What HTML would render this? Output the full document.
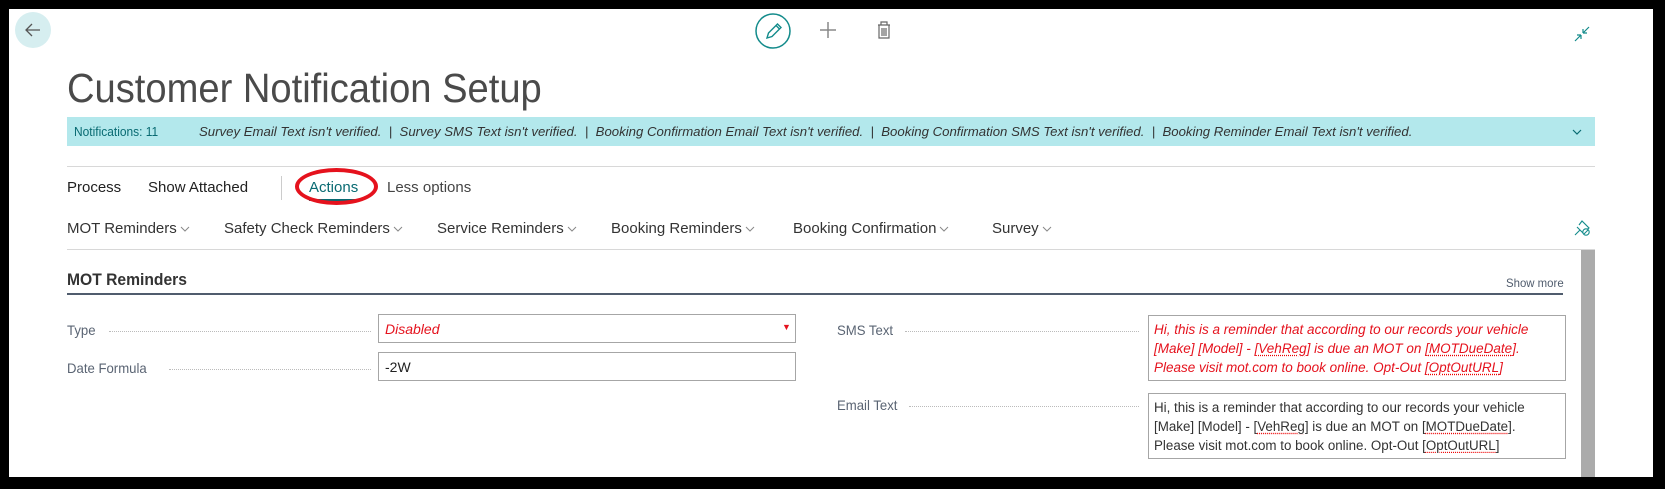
<!DOCTYPE html>
<html><head><meta charset="utf-8"><style>
*{margin:0;padding:0;box-sizing:border-box}
html,body{width:1665px;height:489px;overflow:hidden;background:#000;font-family:"Liberation Sans",sans-serif}
#pg{position:absolute;left:9px;top:9px;width:1644px;height:468px;background:#fff;overflow:hidden}
.a{position:absolute;white-space:nowrap}
.t{color:#212121;font-size:15px}
.lbl{color:#5a6473;font-size:14px;transform:scaleX(0.94);transform-origin:left}
.dots{position:absolute;border-top:1px dotted #bbb;height:0}
.box{position:absolute;border:1px solid #a6a6a6;background:#fff}
.sq{text-decoration:underline dotted #e00;text-underline-offset:2px}
.chev{display:inline-block;width:10px;height:6px;margin-left:3px;vertical-align:middle}
</style></head><body><div id="pg">
<div class="a" style="left:6px;top:3px;width:36px;height:36px;border-radius:50%;background:#d6eef0"></div>
<svg class="a" style="left:15px;top:12px" width="18" height="18" viewBox="0 0 18 18"><path d="M16 9H2M8 3L2 9l6 6" fill="none" stroke="#555" stroke-width="1.3"/></svg>

<svg class="a" style="left:745px;top:3px" width="38" height="38" viewBox="0 0 38 38"><circle cx="19" cy="19" r="17" fill="none" stroke="#138b8b" stroke-width="1.5"/><path d="M13 26l1.5-5 9-9 3.5 3.5-9 9zM22 13.5l3.5 3.5" fill="none" stroke="#138b8b" stroke-width="1.4"/></svg>
<svg class="a" style="left:810px;top:12px" width="18" height="18" viewBox="0 0 18 18"><path d="M9 1v16M1 9h16" stroke="#888" stroke-width="1.5"/></svg>
<svg class="a" style="left:867px;top:11px" width="16" height="20" viewBox="0 0 16 20"><path d="M2 5h12M5 5V2h6v3M3 5v13h10V5M6 8v8M8 8v8M10 8v8" fill="none" stroke="#666" stroke-width="1.2"/></svg>
<svg class="a" style="left:1564px;top:16px" width="18" height="18" viewBox="0 0 18 18"><path d="M2 16l6-6M8 10H4M8 10v4M16 2l-6 6M10 8h4M10 8V4" fill="none" stroke="#138b8b" stroke-width="1.2"/></svg>

<div class="a" style="left:58px;top:56px;font-size:41px;color:#4a4a4a;font-weight:300;transform:scaleX(0.93);transform-origin:left">Customer Notification Setup</div>

<div class="a" style="left:58px;top:108px;width:1528px;height:29px;background:#b3e8ec"></div>
<div class="a" style="left:65px;top:115px;font-size:13px;color:#086a72;transform:scaleX(0.92);transform-origin:left">Notifications: 11</div>
<div class="a" style="left:190px;top:115px;font-size:13px;color:#333;font-style:italic;transform:scaleX(1.015);transform-origin:left">Survey Email Text isn't verified. &nbsp;| &nbsp;Survey SMS Text isn't verified. &nbsp;| &nbsp;Booking Confirmation Email Text isn't verified. &nbsp;| &nbsp;Booking Confirmation SMS Text isn't verified. &nbsp;| &nbsp;Booking Reminder Email Text isn't verified.</div>
<svg class="a" style="left:1563px;top:119px" width="10" height="8" viewBox="0 0 10 8"><path d="M1 2l4 4 4-4" fill="none" stroke="#086a72" stroke-width="1.2"/></svg>

<div class="a" style="left:58px;top:157px;width:1528px;height:1px;background:#d8d8d8"></div>
<div class="a t" style="left:58px;top:170px">Process</div>
<div class="a t" style="left:139px;top:170px">Show Attached</div>
<div class="a" style="left:272px;top:167px;width:1px;height:24px;background:#ccc"></div>
<div class="a t" style="left:300px;top:170px;color:#086a72">Actions</div>
<div class="a" style="left:300px;top:190px;width:52px;height:2px;background:#086a72"></div>
<div class="a" style="left:286px;top:159px;width:83px;height:37px;border:4px solid #e5121d;border-radius:50%/50%"></div>
<div class="a t" style="left:378px;top:170px;color:#444">Less options</div>

<div style="position:absolute;left:58px;top:211px;font-size:15px;color:#333;white-space:nowrap">
<span class="a" style="left:0">MOT Reminders<svg class="chev" viewBox="0 0 10 6"><path d="M1 1l4 4 4-4" fill="none" stroke="#888"/></svg></span>
<span class="a" style="left:157px">Safety Check Reminders<svg class="chev" viewBox="0 0 10 6"><path d="M1 1l4 4 4-4" fill="none" stroke="#888"/></svg></span>
<span class="a" style="left:370px">Service Reminders<svg class="chev" viewBox="0 0 10 6"><path d="M1 1l4 4 4-4" fill="none" stroke="#888"/></svg></span>
<span class="a" style="left:544px">Booking Reminders<svg class="chev" viewBox="0 0 10 6"><path d="M1 1l4 4 4-4" fill="none" stroke="#888"/></svg></span>
<span class="a" style="left:726px">Booking Confirmation<svg class="chev" viewBox="0 0 10 6"><path d="M1 1l4 4 4-4" fill="none" stroke="#888"/></svg></span>
<span class="a" style="left:925px">Survey<svg class="chev" viewBox="0 0 10 6"><path d="M1 1l4 4 4-4" fill="none" stroke="#888"/></svg></span>
</div>
<svg class="a" style="left:1564px;top:210px" width="18" height="18" viewBox="0 0 18 18"><path d="M2 16l5-5M4 8l6 6M6 6l3-4 7 7-4 3" fill="none" stroke="#138b8b" stroke-width="1.1"/><circle cx="13" cy="13" r="3.2" fill="#fff" stroke="#138b8b" stroke-width="1.1"/><path d="M11 15l4-4" stroke="#138b8b" stroke-width="1.1"/></svg>

<div class="a" style="left:58px;top:240px;width:1528px;height:1px;background:#d8d8d8"></div>
<div class="a" style="left:1572px;top:241px;width:14px;height:240px;background:#ababab"></div>

<div class="a" style="left:58px;top:261px;font-size:17px;font-weight:bold;color:#333;transform:scaleX(0.92);transform-origin:left">MOT Reminders</div>
<div class="a" style="left:58px;top:284px;width:1496px;height:2px;background:#505c6d"></div>
<div class="a" style="left:1497px;top:267px;font-size:12px;color:#505c6d;transform:scaleX(0.95);transform-origin:left">Show more</div>

<div class="a lbl" style="left:58px;top:313px">Type</div>
<div class="dots" style="left:100px;top:322px;width:262px"></div>
<div class="box" style="left:369px;top:305px;width:418px;height:29px"></div>
<div class="a" style="left:376px;top:312px;font-size:14px;color:#e5121d;font-style:italic">Disabled</div>
<div class="a" style="left:773px;top:313px;font-size:9px;color:#e5121d">▼</div>

<div class="a lbl" style="left:58px;top:351px">Date Formula</div>
<div class="dots" style="left:160px;top:360px;width:202px"></div>
<div class="box" style="left:369px;top:343px;width:418px;height:29px"></div>
<div class="a" style="left:376px;top:350px;font-size:14px;color:#222">-2W</div>

<div class="a lbl" style="left:828px;top:313px">SMS Text</div>
<div class="dots" style="left:896px;top:322px;width:234px"></div>
<div class="box" style="left:1139px;top:306px;width:418px;height:66px"></div>
<div class="a" style="left:1145px;top:311px;font-size:13.5px;line-height:19px;color:#e5121d;font-style:italic;transform:scaleX(1.0);transform-origin:left">Hi, this is a reminder that according to our records your vehicle<br>[Make] [Model] - [<span class="sq">VehReg</span>] is due an MOT on [<span class="sq">MOTDueDate</span>].<br>Please visit mot.com to book online. Opt-Out [<span class="sq">OptOutURL</span>]</div>

<div class="a lbl" style="left:828px;top:388px">Email Text</div>
<div class="dots" style="left:900px;top:397px;width:230px"></div>
<div class="box" style="left:1139px;top:384px;width:418px;height:66px"></div>
<div class="a" style="left:1145px;top:389px;font-size:13.5px;line-height:19px;color:#333;transform:scaleX(0.99);transform-origin:left">Hi, this is a reminder that according to our records your vehicle<br>[Make] [Model] - [<span class="sq">VehReg</span>] is due an MOT on [<span class="sq">MOTDueDate</span>].<br>Please visit mot.com to book online. Opt-Out [<span class="sq">OptOutURL</span>]</div>
</div></body></html>
